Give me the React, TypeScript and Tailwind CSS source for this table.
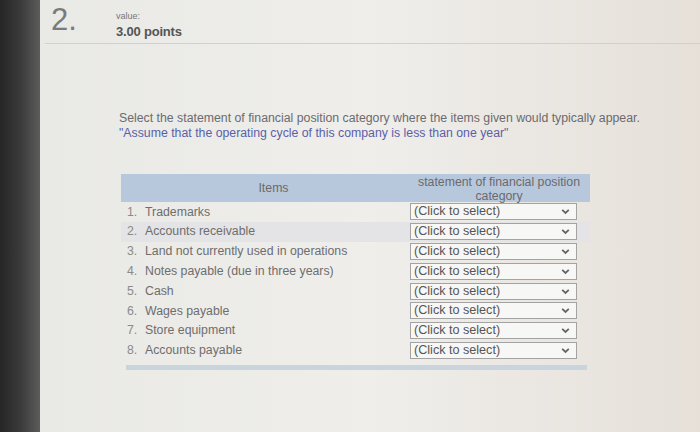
const items = [
  "Trademarks",
  "Accounts receivable",
  "Land not currently used in operations",
  "Notes payable (due in three years)",
  "Cash",
  "Wages payable",
  "Store equipment",
  "Accounts payable",
];

function Chevron() {
  return (
    <svg width="9" height="7" viewBox="0 0 9 7" className="text-[#666]">
      <path d="M1.2 1.8 L4.5 5 L7.8 1.8" fill="none" stroke="currentColor" strokeWidth="1.8" />
    </svg>
  );
}

export default function App() {
  return (
    <div className="flex h-[432px] w-[700px] overflow-hidden font-['Liberation_Sans',Arial,sans-serif]">
      {/* dark bezel on the left */}
      <div className="w-[40px] shrink-0 bg-gradient-to-r from-[#262626] via-[#3a3a3a] to-[#5c5c5c]" />

      <div className="flex-1 bg-gradient-to-r from-[#e9e9e6] via-[#efeeeb] to-[#e6e0d9]">
        {/* question header */}
        <div className="ml-[5px] flex h-[44px] items-start border-b border-[#d2d0cc] pl-[6px]">
          <div className="w-[65px] pt-[4px] text-[31px] leading-[31px] text-[#7a7a7a]">2.</div>
          <div className="pt-[11px]">
            <div className="text-[9px] leading-[10px] text-[#777]">value:</div>
            <div className="mt-[4px] text-[13px] font-bold leading-[14px] tracking-[-0.2px] text-[#555]">
              3.00 points
            </div>
          </div>
        </div>

        {/* instructions */}
        <div className="ml-[79px] mt-[67px] text-[12.3px] leading-[15px]">
          <p className="text-[#6b6b70]">
            Select the statement of financial position category where the items given would typically appear.
          </p>
          <p className="text-[#5b5fa8]">"Assume that the operating cycle of this company is less than one year"</p>
        </div>

        {/* table */}
        <div className="ml-[81px] mt-[33px] w-[469px]">
          <div className="grid h-[28px] grid-cols-[287px_182px] bg-[#b8c8dc] text-[12.3px] text-[#6a6a6e]">
            <div className="flex items-center justify-center pl-[18px]">Items</div>
            <div className="pt-[1px] text-center leading-[14px]">
              statement of financial position
              <br />
              category
            </div>
          </div>

          {items.map((item, i) => (
            <div
              key={item}
              className={`grid h-[19.8px] grid-cols-[287px_182px] items-center text-[12.3px] ${
                i === 1 ? "bg-[#e4e4e6]" : ""
              }`}
            >
              <div className="flex pl-[6px] text-[#6e6e6e]">
                <span className="w-[18px] text-[#8a8a8a]">{i + 1}.</span>
                <span>{item}</span>
              </div>
              <div className="pl-[2px]">
                <div className="flex h-[17px] w-[167px] items-center justify-between border border-[#a3a3a3] bg-[#f7f7f6] pl-[3px] pr-[6px] text-[12.6px] text-[#555]">
                  <span>(Click to select)</span>
                  <Chevron />
                </div>
              </div>
            </div>
          ))}

          <div className="ml-[5px] mt-[5px] h-[5px] w-[461px] bg-[#c9d4dc]" />
        </div>
      </div>
    </div>
  );
}
